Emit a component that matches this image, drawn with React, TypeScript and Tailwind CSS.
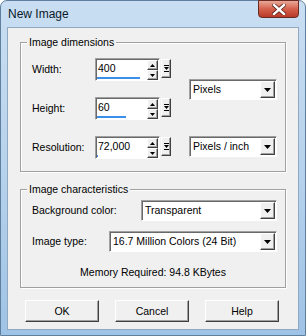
import { FC } from "react";

const raised =
  "border border-t-white border-l-white border-b-[#404040] border-r-[#404040] shadow-[inset_-1px_-1px_0_#a0a0a0] bg-[#f0f0f0]";
const sunken =
  "border border-t-[#a0a0a0] border-l-[#a0a0a0] border-b-white border-r-white shadow-[inset_1px_1px_0_#696969] bg-white";

const Tri: FC<{ up?: boolean; w: number; h: number }> = ({ up, w, h }) => (
  <svg width={w} height={h} viewBox={`0 0 ${w} ${h}`} className="block">
    <polygon
      points={up ? `${w / 2},0 ${w},${h} 0,${h}` : `0,0 ${w},0 ${w / 2},${h}`}
      fill="#000"
    />
  </svg>
);

interface SpinProps {
  value: string;
  bar: number;
}

// spin edit with the little blue range bar under the digits
const SpinBox: FC<SpinProps> = ({ value, bar }) => (
  <div className="flex items-start gap-[1px]">
    <div className={`flex w-[65px] h-[23px] ${sunken}`}>
      <div className="flex flex-1 flex-col pl-[1px] pt-[3px]">
        <span className="text-[10.5px] leading-[13px] pl-[1px]">{value}</span>
        <div className="mt-auto mb-[1px] h-[2px] bg-[#3b8fe8]" style={{ width: bar }} />
      </div>
      <div className="flex flex-col w-[11px] mt-[1px] mr-[1px]">
        <div className={`h-[10px] flex items-center justify-center ${raised}`}>
          <Tri up w={5} h={3} />
        </div>
        <div className={`h-[10px] flex items-center justify-center ${raised}`}>
          <Tri w={5} h={3} />
        </div>
      </div>
    </div>
    <div className={`w-[10px] h-[19px] mt-[1px] flex flex-col items-center justify-center gap-[1px] ${raised}`}>
      <div className="w-[5px] h-[1px] bg-black" />
      <Tri w={5} h={3} />
      <div className="w-[5px] h-[1px] bg-black" />
    </div>
  </div>
);

const Combo: FC<{ text: string; width: string }> = ({ text, width }) => (
  <div className={`flex items-center h-[21px] ${width} ${sunken}`}>
    <span className="flex-1 pl-[3px] text-[10.5px] leading-[13px] whitespace-nowrap overflow-hidden">
      {text}
    </span>
    <div className={`w-[15px] h-[17px] mr-[1px] flex items-center justify-center ${raised}`}>
      <Tri w={7} h={4} />
    </div>
  </div>
);

const Group: FC<{ title: string; height: string; children: React.ReactNode }> = ({
  title,
  height,
  children,
}) => (
  <div
    className={`flex flex-col w-[266px] ${height} border border-[#a0a0a0] shadow-[inset_1px_1px_0_#fff,1px_1px_0_#fff]`}
  >
    <span className="-mt-[7px] ml-[6px] px-[2px] w-fit bg-[#f0f0f0] text-[10.5px] leading-[13px]">
      {title}
    </span>
    {children}
  </div>
);

const rows = [
  { label: "Width:", value: "400", bar: 43 },
  { label: "Height:", value: "60", bar: 29 },
  { label: "Resolution:", value: "72,000", bar: 1 },
];

export default function App() {
  return (
    <div className="w-[306px] h-[336px] flex flex-col rounded-t-[7px] border border-[#5f7f9f] bg-gradient-to-b from-[#c9def2] via-[#b7d2ec] to-[#9fc3e6] font-['Liberation_Sans',Arial,sans-serif] text-black">
      {/* title bar */}
      <div className="flex h-[26px] justify-between">
        <span className="pl-[7px] pt-[6px] text-[12px] leading-[15px] text-[#0a1a2a]">New Image</span>
        <div className="w-[41px] h-[18px] mr-[6px] -mt-[1px] rounded-b-[4px] border border-[#6a2a22] bg-gradient-to-b from-[#e8a898] via-[#d4604c] to-[#b83a28] flex items-center justify-center">
          <svg width="14" height="11" viewBox="0 0 14 11">
            <path d="M2 1 L12 10 M12 1 L2 10" stroke="#5a2018" strokeWidth="4" strokeLinecap="square" />
            <path d="M2 1 L12 10 M12 1 L2 10" stroke="#fff" strokeWidth="2.4" strokeLinecap="square" />
          </svg>
        </div>
      </div>

      {/* client area */}
      <div className="ml-[6px] w-[292px] h-[303px] border border-[#8fa9c2] bg-[#f0f0f0] flex flex-col pt-[14px] pl-[12px]">
        <Group title="Image dimensions" height="h-[130px]">
          <div className="flex">
            <div className="flex flex-col gap-[16px] pt-[9px] pl-[11px]">
              {rows.map((r) => (
                <div key={r.label} className="flex items-center">
                  <span className="w-[63px] text-[10.5px] leading-[13px]">{r.label}</span>
                  <SpinBox value={r.value} bar={r.bar} />
                </div>
              ))}
            </div>
            <div className="flex flex-col pl-[18px] pt-[30px] gap-[36px]">
              <Combo text="Pixels" width="w-[88px]" />
              <Combo text="Pixels / inch" width="w-[88px]" />
            </div>
          </div>
        </Group>

        <div className="h-[17px]" />

        <Group title="Image characteristics" height="h-[99px]">
          <div className="flex flex-col gap-[10px] pl-[11px] pr-[8px] pt-[4px]">
            <div className="flex items-center justify-between">
              <span className="text-[10.5px] leading-[13px]">Background color:</span>
              <Combo text="Transparent" width="w-[136px]" />
            </div>
            <div className="flex items-center justify-between">
              <span className="text-[10.5px] leading-[13px]">Image type:</span>
              <Combo text="16.7 Million Colors (24 Bit)" width="w-[168px]" />
            </div>
          </div>
          <div className="mt-[14px] text-center text-[10.5px] leading-[13px]">Memory Required: 94.8 KBytes</div>
        </Group>

        <div className="flex gap-[16px] pl-[5px] mt-[12px]">
          {["OK", "Cancel", "Help"].map((b) => (
            <button
              key={b}
              className={`w-[74px] h-[22px] text-[10.5px] leading-[13px] ${raised}`}
            >
              {b}
            </button>
          ))}
        </div>
      </div>
    </div>
  );
}
